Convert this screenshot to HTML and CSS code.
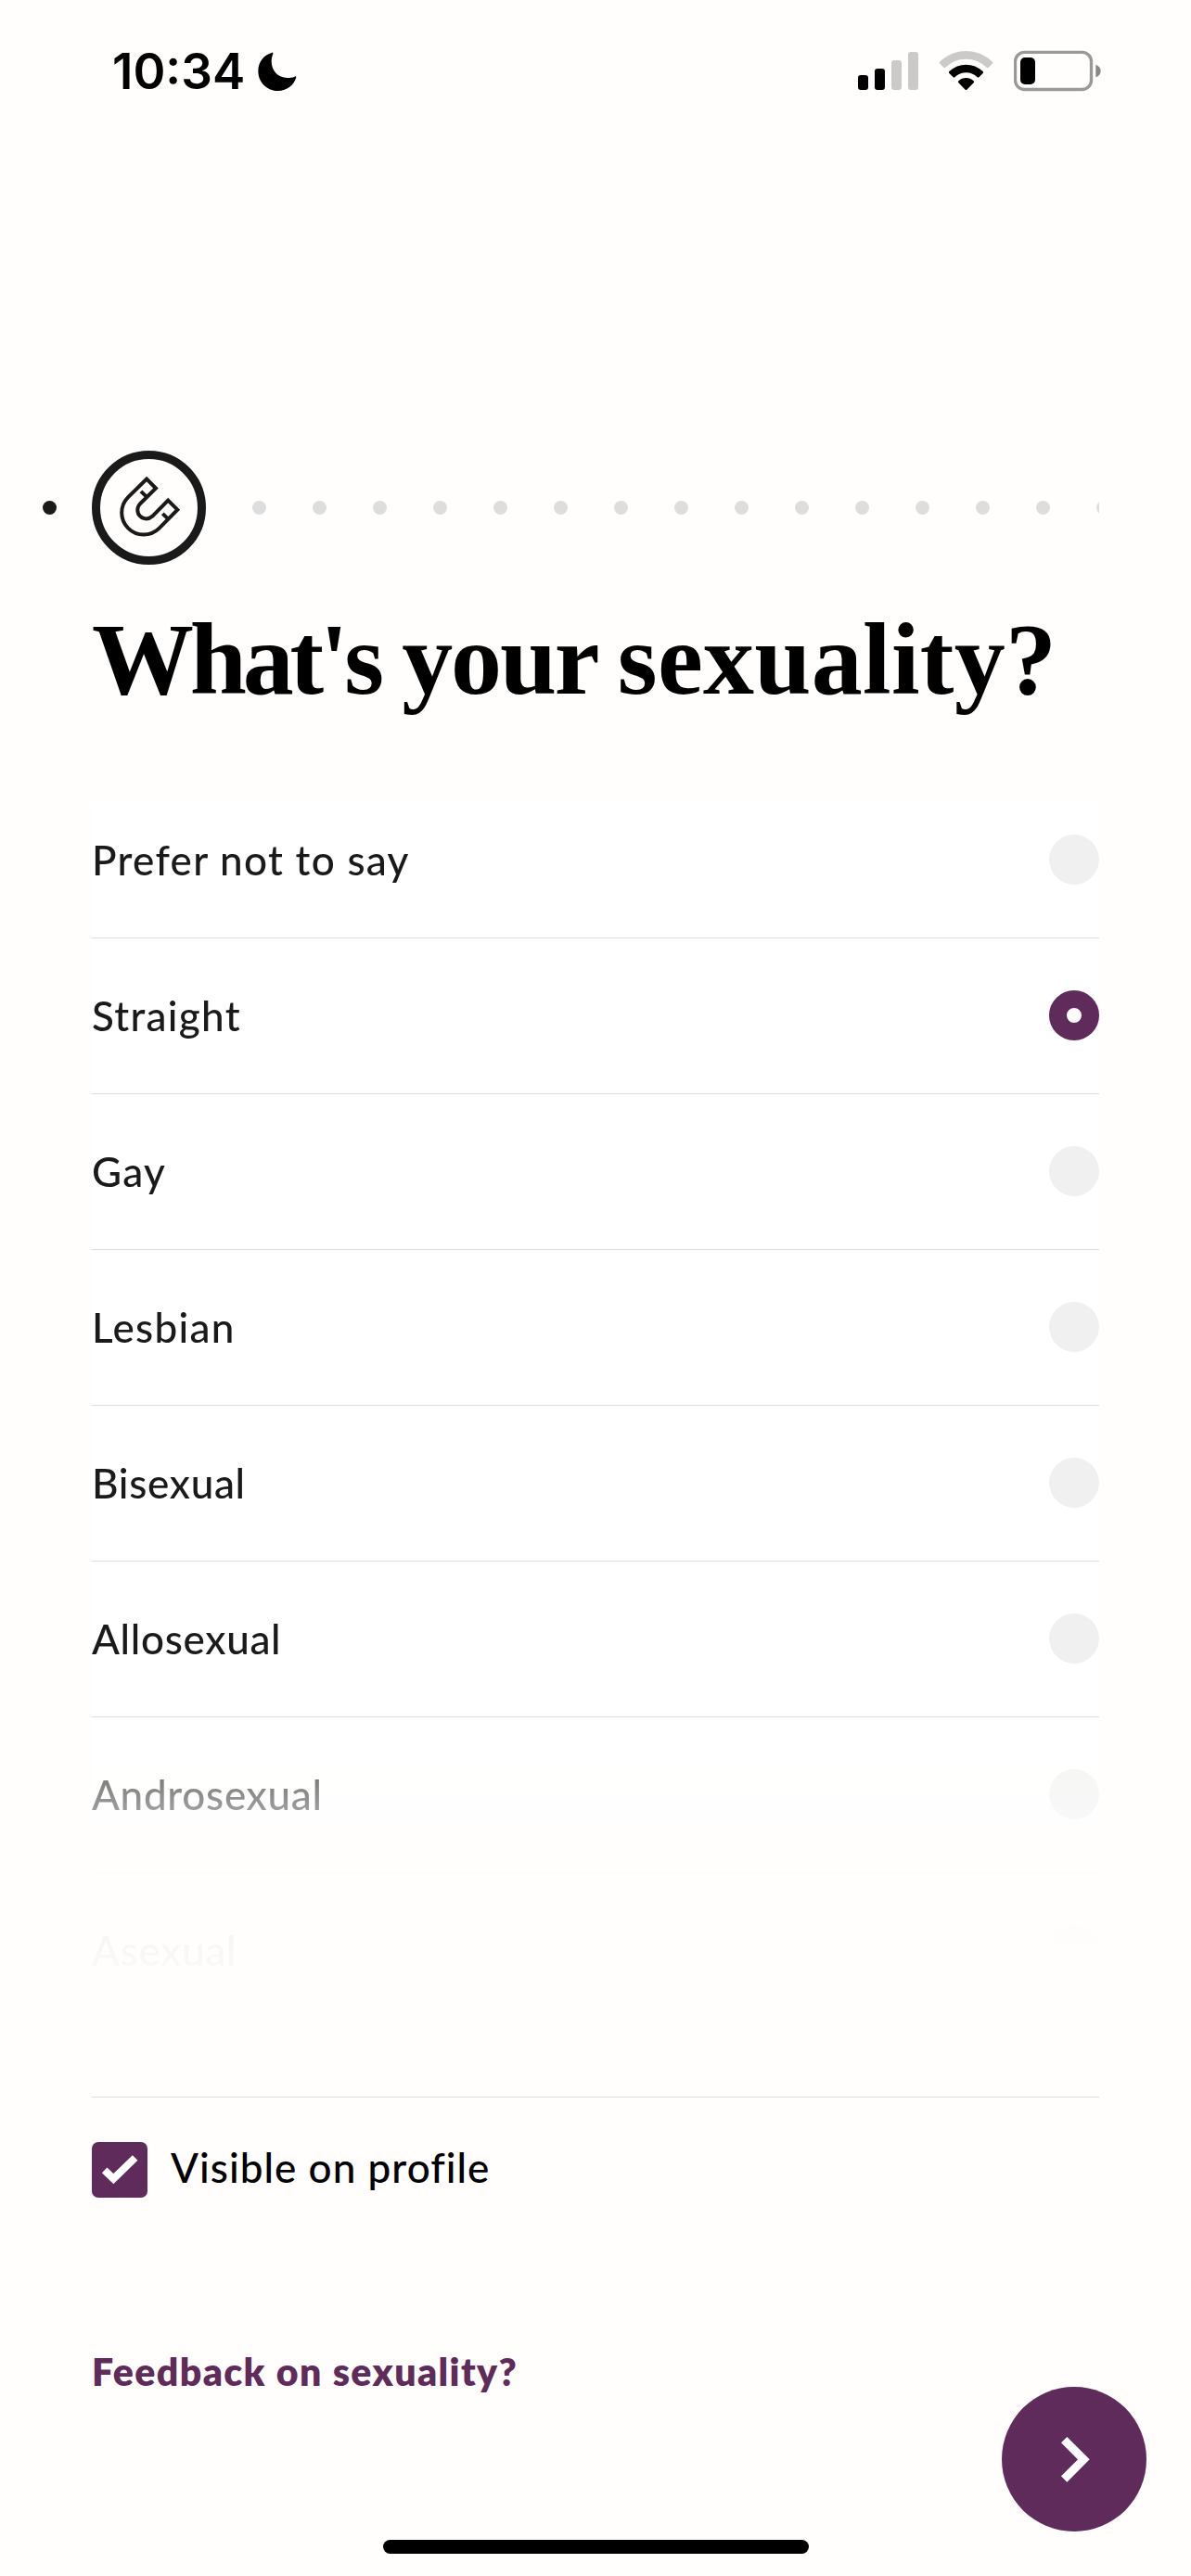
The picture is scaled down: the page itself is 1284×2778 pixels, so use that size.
FILE: index.html
```html
<!DOCTYPE html>
<html lang="en">
<head>
<meta charset="utf-8">
<title>What's your sexuality?</title>
<link rel="stylesheet" href="styles.css">
</head>
<body>
<div class="screen">
  <header class="status">
    <span class="time">10:34</span>
    <svg class="moon" viewBox="566 78 126 127"><path d="M612 80C585 88 567 110 567 140C567 176 596 204 631 204C660 204 683 186 690 160C690 157 688 156 685 158C678 161 669 162 661 162C632 162 610 140 610 109C610 100 612 92 615 84C616 81 614 79 612 80Z"/></svg>
    <div class="indicators">
      <svg class="signal" viewBox="75 69 195 135">
        <rect x="75" y="150" width="33" height="48" rx="9"/><rect x="129" y="129" width="33" height="69" rx="9"/>
        <g fill="#cbcac9"><rect x="183" y="102" width="33" height="96" rx="9"/><rect x="237" y="75" width="33" height="123" rx="9"/></g>
      </svg>
      <svg class="wifi" viewBox="336 69 177 135">
        <path fill="#cbcac9" d="M339 107Q376 72 424.500 72T510 107Q512 110 510 112L497 126Q495 128 492 126Q463 98 424.500 98T357 126Q354 128 352 126L339 112Q337 110 339 107Z"/>
        <path d="M370 138Q394 116 424.500 116T479 138Q482 141 479 144L466 157Q464 159 461 157Q445 142 424.500 142T388 157Q385 159 383 157L370 144Q367 141 370 138Z"/>
        <path d="M400 169Q411 159 424.500 159T449 169Q452 172 449 175L427 197Q424.500 199 422 197L400 175Q397 172 400 169Z"/>
      </svg>
      <svg class="battery" viewBox="579 69 282 135">
        <rect x="583.500" y="76" width="246" height="120.500" rx="30" fill="none" stroke="#999" stroke-width="10"/>
        <rect x="600" y="93" width="48" height="87" rx="15"/>
        <path fill="#888" d="M844 116Q860 122 860 136.500T844 157Z"/>
      </svg>
    </div>
  </header>

  <div class="progress">
    <i class="dot done"></i>
    <div class="step">
      <svg viewBox="234 105 315 315" fill="none" stroke="#1a1a1a" stroke-width="12">
        <path d="M384.500 169.500L323.800 229.300A71 71 0 0 0 424.200 329.700L484 269L453.500 238.500L402.500 290.500A28.300 28.300 0 0 1 362.500 250.500L414 199.500ZM366 209.500L382 225.500M436 281.500L452 297.500"/>
      </svg>
    </div>
    <div class="dots">
      <i class="dot"></i><i class="dot"></i><i class="dot"></i><i class="dot"></i><i class="dot"></i><i class="dot"></i><i class="dot"></i><i class="dot"></i><i class="dot"></i><i class="dot"></i><i class="dot"></i><i class="dot"></i><i class="dot"></i><i class="dot"></i><i class="dot"></i>
    </div>
  </div>

  <h1><span class="tight">What's</span> your <span class="loose">sexuality?</span></h1>

  <ul class="options">
    <li><span>Prefer not to say</span><i class="radio"></i></li>
    <li><span>Straight</span><i class="radio selected"></i></li>
    <li><span>Gay</span><i class="radio"></i></li>
    <li><span>Lesbian</span><i class="radio"></i></li>
    <li><span class="snug">Bisexual</span><i class="radio"></i></li>
    <li><span class="snug">Allosexual</span><i class="radio"></i></li>
    <li><span class="snug">Androsexual</span><i class="radio"></i></li>
    <li><span class="snug">Asexual</span><i class="radio"></i></li>
  </ul>

  <div class="visibility">
    <svg class="checkbox" viewBox="0 0 180 180"><rect width="180" height="180" rx="21" fill="#5f2b5a"/><path d="M41 91L70 119L140 51" fill="none" stroke="#fff" stroke-width="24"/></svg>
    <span>Visible on profile</span>
  </div>

  <footer>
    <a class="feedback">Feedback on sexuality?</a>
    <div class="next">
      <svg viewBox="0 0 468 468"><path d="M201.500 171.500L265 235L201.500 298.500" fill="none" stroke="#fff" stroke-width="27"/></svg>
    </div>
  </footer>
  <div class="home"></div>
</div>
</body>
</html>
```
FILE: styles.css
```css
* { box-sizing: border-box; }
body { margin: 0; background: #fffefd; }
svg, i { display: block; flex: none; }

.screen {
  width: 1284px;
  height: 2778px;
  display: flex;
  flex-direction: column;
  overflow: hidden;
  background: #fffefd;
  color: #1a1a1a;
  font-family: Lato, "Liberation Sans", sans-serif;
  font-size: 44px;
  font-weight: 500;
  letter-spacing: 1.300px;
}

.status {
  height: 153px;
  flex: none;
  display: flex;
  align-items: center;
  padding: 0 97px 0 121px;
}
.time {
  font: 600 53px/64px Inter, sans-serif;
  letter-spacing: 0;
  color: #000;
}
.moon { width: 42px; height: 42.300px; margin: 2px 0 0 14px; }
.indicators { display: flex; gap: 22px; margin-left: auto; }
.signal { width: 65px; height: 45px; }
.wifi { width: 59px; height: 45px; }
.battery { width: 94px; height: 45px; }

.progress {
  display: flex;
  align-items: center;
  flex: none;
  height: 123px;
  margin: 333px 99px 0 46px;
}
.dot { width: 15px; height: 15px; border-radius: 50%; background: #ddd; }
.dot.done { background: #1a1a1a; }
.step {
  flex: none;
  width: 123px;
  height: 123px;
  margin: 0 50px 0 38px;
  border: 9px solid #1a1a1a;
  border-radius: 50%;
}
.dots { display: flex; gap: 50px; flex: 1; min-width: 0; overflow: hidden; }

h1 {
  margin: 42px 0 0 99px;
  flex: none;
  font: 700 110px/120px "Liberation Serif", serif;
  letter-spacing: -2.200px;
  word-spacing: -2px;
  white-space: nowrap;
  color: #000;
}
.tight { letter-spacing: -4.200px; }
.loose { letter-spacing: 0.300px; }

.options {
  list-style: none;
  height: 1395px;
  flex: none;
  margin: 95px 99px 0;
  padding: 0;
  overflow: hidden;
  background: #fff;
  -webkit-mask-image: linear-gradient(#000 984px, rgba(0,0,0,.56) 1054px, rgba(0,0,0,.43) 1084px, rgba(0,0,0,.1) 1153px, rgba(0,0,0,.035) 1225px, transparent 1320px);
  mask-image: linear-gradient(#000 984px, rgba(0,0,0,.56) 1054px, rgba(0,0,0,.43) 1084px, rgba(0,0,0,.1) 1153px, rgba(0,0,0,.035) 1225px, transparent 1320px);
}
.options li {
  display: flex;
  align-items: center;
  justify-content: space-between;
  height: 168px;
  padding-bottom: 1px;
  border-bottom: 1px solid #ddd;
}
.options li:first-child { height: 146px; padding-bottom: 23px; }
.options span { padding-bottom: 1px; }
.options .snug { letter-spacing: 0.700px; }
.radio { width: 54px; height: 54px; border-radius: 50%; background: #f0f0f0; }
.radio.selected { border: 19px solid #5f2b5a; background: #fffefd; }

.visibility {
  display: flex;
  align-items: center;
  gap: 25px;
  flex: none;
  margin: 0 99px;
  height: 157px;
  border-top: 1px solid #ddd;
  color: #000;
}
.checkbox { width: 60px; height: 60px; }
.visibility span { padding-bottom: 6px; letter-spacing: 1.050px; }

footer {
  display: flex;
  justify-content: space-between;
  align-items: flex-start;
  flex: none;
  height: 321px;
  padding: 113px 48px 0 99px;
}
.feedback {
  font-size: 41px;
  line-height: 54px;
  font-weight: 800;
  letter-spacing: 1.400px;
  color: #5f2b5a;
}
.next {
  width: 156px;
  height: 156px;
  margin-top: 43px;
  border-radius: 50%;
  background: #5f2b5a;
}
.home { width: 459px; height: 15px; flex: none; margin-left: 413px; border-radius: 8px; background: #000; }
```
